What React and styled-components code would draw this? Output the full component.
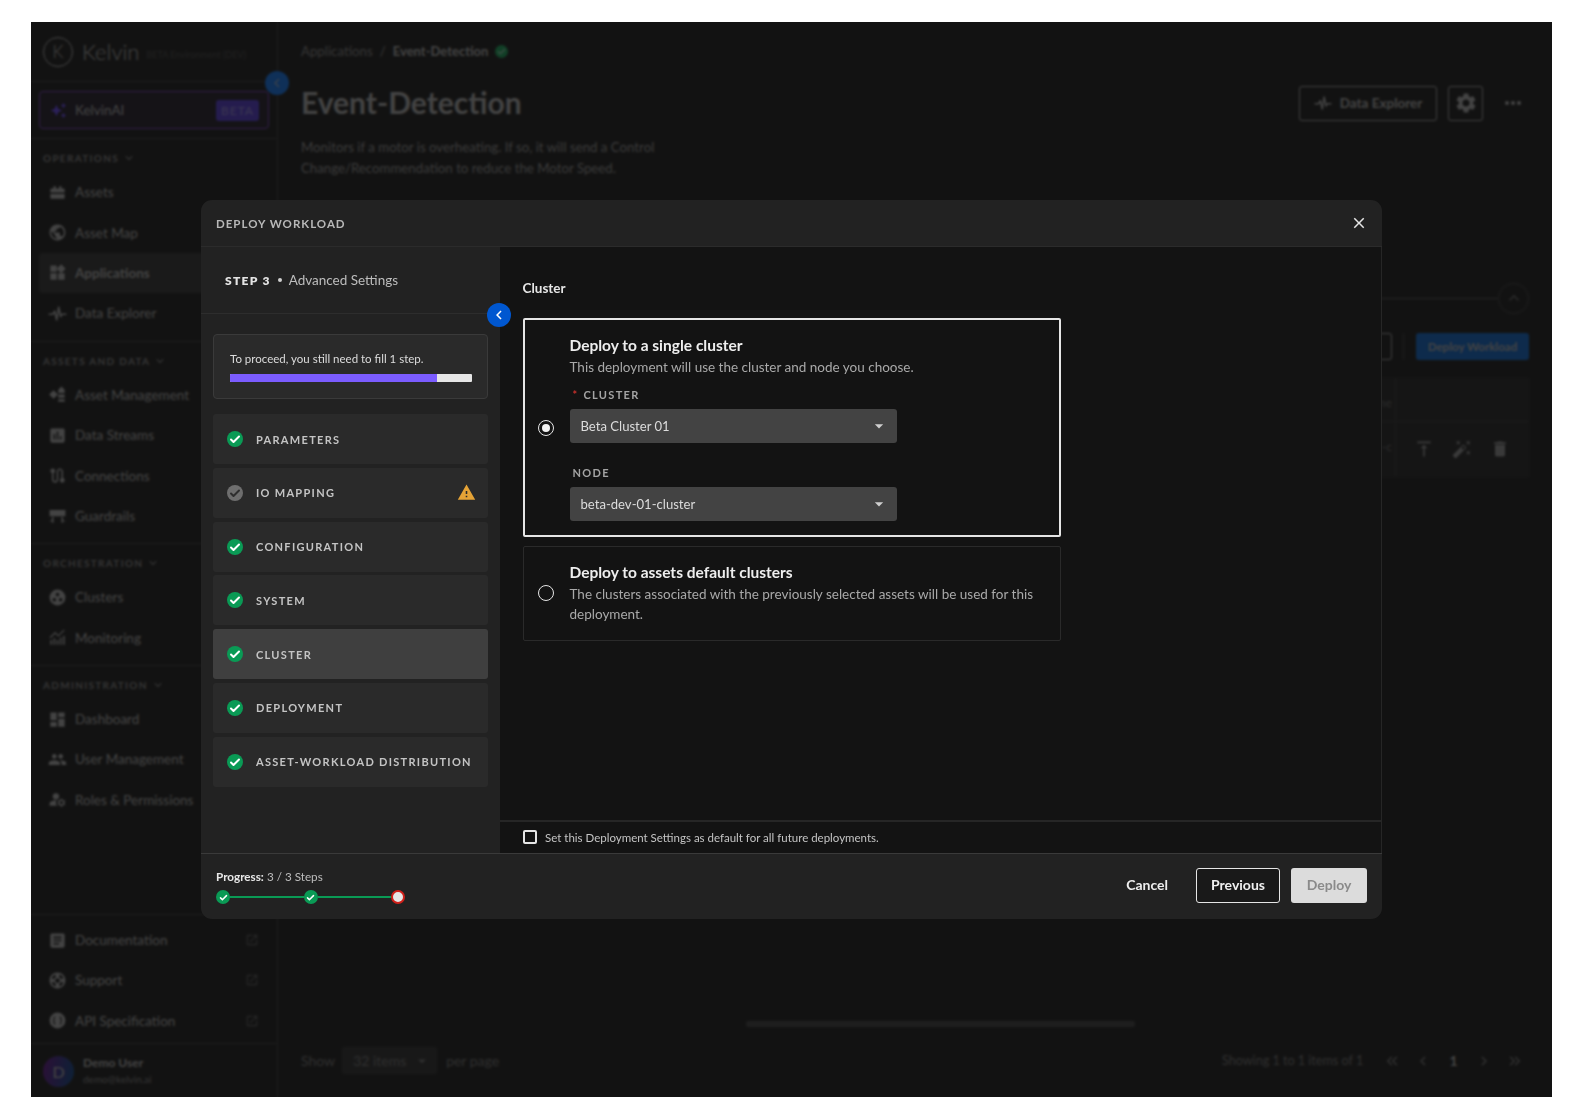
import styled, { createGlobalStyle } from 'styled-components';
import {
  MdAssessment, MdArrowDropDown, MdArticle, MdAutoAwesome, MdAutoFixHigh, MdChevronLeft, MdChevronRight,
  MdClose, MdDashboard, MdDelete, MdExpandLess, MdExpandMore, MdKeyboardDoubleArrowLeft,
  MdKeyboardDoubleArrowRight, MdManageAccounts, MdMoreHoriz, MdOpenInNew, MdPeople, MdPublic,
  MdRoute, MdSettings, MdSupport, MdVerticalAlignTop, MdWarning, MdWidgets,
} from 'react-icons/md';

const FONT = '"Lato", "Noto Sans", "Liberation Sans", sans-serif';

const GlobalStyle = createGlobalStyle`
  html, body { margin: 0; background: #fff; }
  body { font-family: ${FONT}; }
  * { box-sizing: border-box; }
`;

const Page = styled.div`
  width: 1584px;
  height: 1120px;
  padding: 22px 32px 23px 31px;
`;

const Frame = styled.div`
  position: relative;
  display: flex;
  width: 1521px;
  height: 1075px;
  overflow: hidden;
  background: #363636;
  color: #c0c0c0;
`;

/* sidebar */
const Sidebar = styled.aside`
  position: relative;
  display: flex;
  flex-direction: column;
  flex: 0 0 247px;
  border-right: 1px solid #505050;
`;

const Brand = styled.div`
  display: flex;
  align-items: center;
  height: 60px;
  padding-left: 12px;
  border-bottom: 1px solid #505050;
`;

const LogoMark = styled.span`
  display: flex;
  align-items: center;
  justify-content: center;
  width: 30px;
  height: 30px;
  border: 1.5px solid #c0c0c0;
  border-radius: 50%;
  font-size: 17px;
  font-weight: 300;
`;

const LogoText = styled.span`
  margin-left: 9px;
  font-size: 22px;
  font-weight: 300;
`;

const EnvText = styled.span`
  margin: 5px 0 0 7px;
  font-size: 9px;
  color: #5e5e5e;
  white-space: nowrap;
`;

const Collapse = styled.button`
  position: absolute;
  display: flex;
  align-items: center;
  justify-content: center;
  width: 24px;
  height: 24px;
  padding: 0;
  border: none;
  border-radius: 50%;
  color: ${(p) => p.$fg || '#fff'};
  background: ${(p) => p.$bg || '#0057d0'};
  font-size: 18px;
  top: ${(p) => p.$top}px;
  right: ${(p) => p.$right}px;
  z-index: 2;
`;

const AiWrap = styled.div`
  padding: 9px 8px 9px;
  border-bottom: 1px solid #505050;
`;

const AiBox = styled.div`
  display: flex;
  align-items: center;
  height: 38px;
  padding: 0 9px 0 10px;
  border: 1px solid #8a55c8;
  border-radius: 4px;
  background: #3d3744;
  font-size: 13.5px;
  color: #c0c0c0;
`;

const AiStar = styled(MdAutoAwesome)`
  font-size: 17px;
  color: #7b5cff;
  margin-right: 8px;
`;

const BetaTag = styled.span`
  margin-left: auto;
  padding: 3px 5px;
  border-radius: 3px;
  background: #6a52e0;
  color: #a79be8;
  font-size: 12px;
  letter-spacing: 1px;
`;

const NavSection = styled.div`
  padding-bottom: ${(p) => p.$pad ?? 6}px;
  border-bottom: 1px solid #505050;
`;

const SectionLabel = styled.div`
  display: flex;
  align-items: center;
  gap: 3px;
  height: 33px;
  padding: 5px 0 0 12px;
  font-size: 10px;
  font-weight: 700;
  letter-spacing: 1.3px;
  color: #969696;
  svg { font-size: 14px; }
`;

const NavItem = styled.div`
  display: flex;
  align-items: center;
  height: 40.4px;
  margin: 0 8px;
  padding-left: 9px;
  border-radius: 4px;
  font-size: 13.5px;
  background: ${(p) => (p.$active ? '#4a4a4a' : 'transparent')};
  font-weight: ${(p) => (p.$active ? 700 : 400)};
  white-space: nowrap;
`;

const NavGlyph = styled.span`
  display: flex;
  justify-content: center;
  flex: 0 0 18px;
  margin-right: 8px;
  font-size: 19px;
  svg { width: 19px; height: 19px; }
`;

const ExternalMark = styled(MdOpenInNew)`
  margin: 0 10px 0 auto;
  font-size: 14px;
  color: #6e6e6e;
`;

const SidebarBottom = styled.div`
  margin-top: auto;
  padding: 5px 0 2px;
  border-top: 1px solid #505050;
`;

const UserBlock = styled.div`
  display: flex;
  align-items: center;
  height: 54px;
  padding-left: 12px;
  border-top: 1px solid #505050;
`;

const Avatar = styled.span`
  display: flex;
  align-items: center;
  justify-content: center;
  width: 31px;
  height: 31px;
  margin: 2px 9px 0 0;
  border-radius: 50%;
  background: linear-gradient(100deg, #7c2d9c, #24609c);
  font-size: 16px;
`;

const UserName = styled.div`
  font-size: 12px;
  font-weight: 700;
  line-height: 16px;
`;

const UserMail = styled.div`
  font-size: 10px;
  line-height: 16px;
  color: #969696;
`;

/* page behind the dialog */
const Main = styled.main`
  display: flex;
  flex-direction: column;
  flex: 1;
  min-width: 0;
  padding: 0 23px 23px 23px;
`;

const Breadcrumb = styled.div`
  display: flex;
  align-items: center;
  gap: 7px;
  height: 58px;
  font-size: 13.25px;
  color: #969696;
`;

const CrumbStrong = styled.span`
  font-weight: 700;
  font-size: 13px;
  color: #c0c0c0;
`;

const HeaderRow = styled.div`
  display: flex;
  align-items: center;
  height: 34px;
  margin-top: 6px;
`;

const Title = styled.h1`
  margin: 0 auto 2px 0;
  font-size: 30px;
  font-weight: 700;
  line-height: 32px;
  color: #c0c0c0;
`;

const OutlineButton = styled.button`
  display: flex;
  align-items: center;
  justify-content: center;
  gap: 8px;
  height: 35px;
  width: ${(p) => p.$w}px;
  margin-left: ${(p) => p.$ml || 0}px;
  padding: 0;
  border: 1px solid #b4b4b4;
  border-radius: 3px;
  background: transparent;
  color: #c0c0c0;
  font-family: inherit;
  font-size: 13.5px;
  font-weight: 700;
`;

const MoreDots = styled(MdMoreHoriz)`
  margin: 0 4px 0 18px;
  font-size: 24px;
`;

const Description = styled.p`
  width: 370px;
  height: 43px;
  margin: 17px 0 0;
  font-size: 13.25px;
  line-height: 21px;
  color: #a4a4a4;
`;

const SectionRule = styled.div`
  display: flex;
  align-items: center;
  height: 30px;
  margin-top: 103px;
`;

const RuleLine = styled.div`
  flex: 1;
  height: 1px;
  background: #666;
`;

const RoundToggle = styled.span`
  display: flex;
  align-items: center;
  justify-content: center;
  width: 31px;
  height: 31px;
  border: 1px solid #555;
  border-radius: 50%;
  font-size: 20px;
  color: #777;
`;

const Toolbar = styled.div`
  display: flex;
  align-items: center;
  justify-content: flex-end;
  height: 27px;
  margin-top: 20px;
`;

const ToolIcon = styled.span`
  width: 30px;
  height: 27px;
  border: 1px solid #b4b4b4;
  border-radius: 3px;
`;

const ToolSep = styled.span`
  width: 1px;
  height: 25px;
  margin: 0 12px 0 11px;
  background: #555;
`;

const PrimaryDim = styled.span`
  display: flex;
  align-items: center;
  justify-content: center;
  width: 113px;
  height: 27px;
  border-radius: 3px;
  background: #287bd9;
  color: #c0c0c0;
  font-size: 11.5px;
  font-weight: 700;
`;

const Table = styled.div`
  margin-top: 18px;
  background: #3e3e3e;
`;

const TableRow = styled.div`
  display: flex;
  justify-content: flex-end;
  height: ${(p) => p.$h}px;
  border-bottom: 1px solid ${(p) => (p.$last ? 'transparent' : '#505050')};
`;

const FragmentCell = styled.div`
  padding-top: 17px;
  font-size: 12px;
  color: #7a7a7a;
  text-align: right;
`;

const ActionCell = styled.div`
  display: flex;
  align-items: center;
  gap: 18px;
  width: 134px;
  padding-left: 18px;
  margin-left: 3px;
  border-left: 1px solid #4d4d4d;
  font-size: 20px;
  color: #a4a4a4;
`;

const ScrollThumb = styled.div`
  width: 389px;
  height: 6px;
  margin: auto 0 0 445px;
  border-radius: 3px;
  background: #585858;
`;

const PagerRow = styled.div`
  display: flex;
  align-items: center;
  height: 27px;
  margin-top: 20px;
  font-size: 14px;
  color: #868686;
`;

const PerPage = styled.span`
  display: flex;
  align-items: center;
  justify-content: space-between;
  width: 95px;
  height: 27px;
  margin: 0 9px 0 7px;
  padding: 0 6px 0 11px;
  border-radius: 3px;
  background: #474747;
  svg { font-size: 18px; }
`;

const PagerText = styled.span`
  margin-left: auto;
  font-size: 12.6px;
`;

const PagerIcons = styled.span`
  display: flex;
  align-items: center;
  gap: 12.7px;
  margin: 0 5px 0 20px;
  svg { flex: 0 0 18px; font-size: 18px; }
`;

const PageNum = styled.span`
  flex: 0 0 18px;
  text-align: center;
  font-weight: 700;
  color: #c0c0c0;
`;

/* dialog */
const Overlay = styled.div`
  position: absolute;
  inset: 0;
  background: rgba(0, 0, 0, 0.65);
  backdrop-filter: blur(1px);
  z-index: 5;
`;

const Modal = styled.section`
  position: absolute;
  left: 170px;
  top: 178px;
  display: flex;
  flex-direction: column;
  width: 1181px;
  height: 719px;
  border-radius: 11px;
  overflow: hidden;
  background: #222;
  z-index: 6;
`;

const ModalHeader = styled.header`
  display: flex;
  align-items: center;
  justify-content: space-between;
  flex: 0 0 47px;
  padding: 0 14px 0 15px;
  border-bottom: 1px solid #2b2b2b;
  font-size: 11.5px;
  font-weight: 700;
  letter-spacing: 1px;
  color: #b8b8b8;
  svg { font-size: 18px; color: #e6e6e6; }
`;

const ModalBody = styled.div`
  position: relative;
  display: flex;
  flex: 1;
  min-height: 0;
`;

const StepsPanel = styled.div`
  flex: 0 0 299px;
  min-width: 0;
`;

const StepHeading = styled.div`
  display: flex;
  align-items: center;
  height: 67px;
  padding-left: 24px;
  border-bottom: 1px solid #2d2d2d;
  font-size: 13.5px;
  color: #bdbdbd;
`;

const StepNumber = styled.span`
  font-size: 12px;
  font-weight: 800;
  letter-spacing: 1.3px;
  color: #e4e4e4;
`;

const StepDot = styled.span`
  width: 4px;
  height: 4px;
  margin: 0 7px 0 7px;
  border-radius: 50%;
  background: #d0d0d0;
`;

const ProceedCard = styled.div`
  height: 65px;
  margin: 20px 12px 15px;
  padding: 17px 15px 0 16px;
  border: 1px solid #3a3a3a;
  border-radius: 4px;
  background: #2a2a2a;
  font-size: 11.5px;
  color: #dcdcdc;
`;

const ProceedTrack = styled.div`
  height: 8px;
  margin-top: 9px;
  border-radius: 1px;
  background: #e6e6e6;
  overflow: hidden;
`;

const ProceedFill = styled.div`
  height: 100%;
  background: #7b5cff;
`;

const StepList = styled.div`
  display: flex;
  flex-direction: column;
  gap: 3.75px;
  margin: 0 12px;
`;

const StepRow = styled.div`
  display: flex;
  align-items: center;
  height: 50px;
  padding: 0 12px 0 14px;
  border-radius: 3px;
  background: ${(p) => (p.$active ? '#3f3f3f' : '#2a2a2a')};
  font-size: 11px;
  font-weight: 700;
  letter-spacing: 1.3px;
  color: #c4c4c4;
  white-space: nowrap;
`;

const StatusIcon = styled.span`
  display: flex;
  align-items: center;
  justify-content: center;
  flex: 0 0 ${(p) => p.$size || 16}px;
  height: ${(p) => p.$size || 16}px;
  margin-right: ${(p) => p.$mr ?? 13}px;
  border-radius: 50%;
  background: ${(p) => p.$bg || '#0a9a55'};
  color: ${(p) => p.$fg || '#fff'};
`;

const WarnIcon = styled(MdWarning)`
  margin-left: auto;
  font-size: 19px;
  color: #e5a336;
`;

const Content = styled.div`
  display: flex;
  flex-direction: column;
  flex: 1;
  min-width: 0;
  background: #131313;
  border-right: 1px solid #262626;
`;

const ContentScroll = styled.div`
  flex: 1;
  padding: 32px 0 0 22.5px;
`;

const ContentTitle = styled.div`
  height: 18px;
  margin-bottom: 21px;
  font-size: 13.5px;
  font-weight: 700;
  line-height: 18px;
  color: #e6e6e6;
`;

const Option = styled.div`
  display: flex;
  align-items: center;
  width: 538px;
  height: ${(p) => p.$h}px;
  margin-bottom: 9px;
  padding-bottom: ${(p) => p.$shift || 0}px;
  border: ${(p) => (p.$selected ? '2px solid #e6e6e6' : '1px solid #2a2a2a')};
  border-radius: 2px;
`;

const RadioCol = styled.div`
  display: flex;
  flex: 0 0 ${(p) => p.$w}px;
  justify-content: center;
  padding-right: 2px;
`;

const Radio = styled.span`
  display: flex;
  align-items: center;
  justify-content: center;
  width: 16px;
  height: 16px;
  border: 1.5px solid #e6e6e6;
  border-radius: 50%;
  &::after {
    content: '';
    display: ${(p) => (p.$on ? 'block' : 'none')};
    width: 8px;
    height: 8px;
    border-radius: 50%;
    background: #f2f2f2;
  }
`;

const OptionBody = styled.div`
  flex: 1;
  padding-right: 20px;
`;

const OptionTitle = styled.div`
  font-size: 15.5px;
  font-weight: 700;
  line-height: 20px;
  color: #eee;
`;

const OptionText = styled.div`
  margin-top: 2px;
  font-size: 13.5px;
  line-height: 20px;
  color: #a9a9a9;
`;

const FieldLabel = styled.div`
  height: 18px;
  margin-top: ${(p) => p.$mt}px;
  padding-left: 3px;
  font-size: 11px;
  font-weight: 700;
  line-height: 18px;
  letter-spacing: 1.3px;
  color: #a4a4a4;
`;

const Required = styled.span`
  margin-right: 5px;
  color: #c9302c;
`;

const SelectBox = styled.div`
  display: flex;
  align-items: center;
  justify-content: space-between;
  width: 327px;
  height: 34px;
  margin-top: 5px;
  padding: 0 8px 0 11px;
  border-radius: 3px;
  background: #434343;
  font-size: 13.1px;
  color: #dcdcdc;
  svg { font-size: 20px; color: #cfcfcf; }
`;

const DefaultsRow = styled.label`
  display: flex;
  align-items: center;
  flex: 0 0 33px;
  padding: 0 0 1px 23px;
  border-top: 2px solid #262626;
  font-size: 11.5px;
  color: #c4c4c4;
`;

const CheckBox = styled.span`
  width: 14px;
  height: 14px;
  margin-right: 8px;
  border: 2px solid #e6e6e6;
  border-radius: 2px;
`;

const ModalFooter = styled.footer`
  display: flex;
  align-items: center;
  flex: 0 0 66px;
  padding: 0 15px;
  border-top: 1px solid #3a3a3a;
`;

const ProgressBlock = styled.div`
  width: 189px;
`;

const ProgressLabel = styled.div`
  margin-top: -1px;
  font-size: 11.7px;
  line-height: 16px;
  color: #bdbdbd;
  b { color: #e8e8e8; }
`;

const Stepper = styled.div`
  display: flex;
  align-items: center;
  margin-top: 6px;
`;

const StepperLine = styled.span`
  flex: 1;
  height: 2.5px;
  background: #0a9a55;
`;

const StepperEnd = styled.span`
  flex: 0 0 14px;
  height: 14px;
  border: 2px solid #d0201a;
  border-radius: 50%;
  background: #e6e6e6;
`;

const FooterActions = styled.div`
  display: flex;
  align-items: center;
  margin: 0 0 2px auto;
`;

const TextButton = styled.button`
  margin-right: 28px;
  padding: 0 0 2px;
  border: none;
  background: none;
  color: #eee;
  font-family: inherit;
  font-size: 14px;
  font-weight: 700;
`;

const GhostButton = styled.button`
  width: 84px;
  height: 35px;
  padding: 0 0 2px;
  border: 1.5px solid #e6e6e6;
  border-radius: 3px;
  background: #191919;
  color: #f0f0f0;
  font-family: inherit;
  font-size: 14px;
  font-weight: 700;
`;

const DisabledButton = styled.button`
  width: 76px;
  height: 35px;
  margin-left: 11px;
  padding: 0 0 2px;
  border: none;
  border-radius: 3px;
  background: #dcdcdc;
  color: #8a8a8a;
  font-family: inherit;
  font-size: 14px;
  font-weight: 700;
`;

const Svg = ({ children, fill = 'currentColor', size = 24, stroke, strokeWidth }) => (
  <svg viewBox="0 0 24 24" width={size} height={size} fill={fill} stroke={stroke} strokeWidth={strokeWidth} strokeLinecap="round" strokeLinejoin="round">
    {children}
  </svg>
);

const Wave = ({ size }) => (
  <Svg fill="none" stroke="currentColor" strokeWidth="2" size={size}>
    <path d="M1.500 13h4.500l2.500-4 2.500 11L13.500 4l2.500 12 1.500-3h5" />
  </Svg>
);
const AssetsIcon = () => (
  <Svg>
    <path d="M3 12V8.500C3 7.700 3.700 7 4.500 7H7V4h3v3h4V4h3v3h2.500c.8 0 1.500.7 1.500 1.500V12zM3 14h18v4.500c0 .8-.7 1.500-1.500 1.500h-15C3.700 20 3 19.300 3 18.500z" />
  </Svg>
);
const AssetMgmtIcon = () => (
  <Svg>
    <path d="M7 6.500 1.500 12 7 17.500 12.500 12zM17 2l-4 4v4h8V6zM13 12h8v4h-8zM13 18h8v3h-8z" />
  </Svg>
);
const GuardIcon = () => (
  <Svg>
    <path d="M2 5h20v8H2zM5 14h2v7H5zM17 14h2v7h-2zM3 18h4v1.500H3zM17 18h4v1.500h-4z" />
  </Svg>
);
const MonitoringIcon = () => (
  <Svg>
    <path d="M3 15h2v6H3zM7 13h2v8H7zM11 15h2v6h-2zM15 12h2v9h-2zM19 10h2v11h-2z" />
    <path d="M3 12l6-6 4 4 7-7" fill="none" stroke="currentColor" strokeWidth="1.500" />
  </Svg>
);
const ClustersIcon = () => (
  <Svg>
    <path
      fillRule="evenodd"
      d="M12 2a10 10 0 1 0 0 20 10 10 0 0 0 0-20zM12 6a2.300 2.300 0 1 1 0 4.600A2.300 2.300 0 0 1 12 6zM8 12.500a2.300 2.300 0 1 1 0 4.600 2.300 2.300 0 0 1 0-4.600zM16 12.500a2.300 2.300 0 1 1 0 4.600 2.300 2.300 0 0 1 0-4.600z"
    />
  </Svg>
);
const ApiIcon = () => (
  <Svg>
    <path d="M12 2a10 10 0 1 0 0 20 10 10 0 0 0 0-20zM9 7c-1.500 0-2 .8-2 2v1.500c0 .8-.4 1.200-1 1.500.6.3 1 .7 1 1.500V15c0 1.200.5 2 2 2v-1.500c-.5 0-.6-.3-.6-.8v-1.500c0-.8-.3-1.300-.8-1.700.5-.4.8-.9.8-1.700V8.300c0-.5.1-.8.6-.8zm6 0v1.500c.5 0 .6.3.6.8v1.500c0 .8.3 1.300.8 1.700-.5.400-.8.900-.8 1.700v1.500c0 .5-.1.800-.6.800V17c1.500 0 2-.8 2-2v-1.500c0-.8.4-1.200 1-1.500-.6-.3-1-.7-1-1.500V9c0-1.200-.5-2-2-2z" fillRule="evenodd" />
  </Svg>
);

const CheckMark = ({ size = 12 }) => (
  <Svg fill="none" stroke="currentColor" strokeWidth="4" size={size}>
    <path d="M4 13l5 5L20 7" />
  </Svg>
);

const NAV = [
  { label: 'OPERATIONS', pad: 7, items: [
    ['Assets', <AssetsIcon />], ['Asset Map', <MdPublic />], ['Applications', <MdWidgets />, true], ['Data Explorer', <Wave />],
  ] },
  { label: 'ASSETS AND DATA', pad: 7, items: [
    ['Asset Management', <AssetMgmtIcon />], ['Data Streams', <MdAssessment />], ['Connections', <MdRoute />], ['Guardrails', <GuardIcon />],
  ] },
  { label: 'ORCHESTRATION', pad: 7, items: [
    ['Clusters', <ClustersIcon />], ['Monitoring', <MonitoringIcon />],
  ] },
  { label: 'ADMINISTRATION', pad: 0, last: true, items: [
    ['Dashboard', <MdDashboard />], ['User Management', <MdPeople />], ['Roles & Permissions', <MdManageAccounts />],
  ] },
];

const LINKS = [
  ['Documentation', <MdArticle />],
  ['Support', <MdSupport />],
  ['API Specification', <ApiIcon />],
];

const STEPS = [
  { name: 'PARAMETERS' },
  { name: 'IO MAPPING', warn: true },
  { name: 'CONFIGURATION' },
  { name: 'SYSTEM' },
  { name: 'CLUSTER', active: true },
  { name: 'DEPLOYMENT' },
  { name: 'ASSET-WORKLOAD DISTRIBUTION' },
];

const SideNav = () => (
  <Sidebar>
    <Brand>
      <LogoMark>K</LogoMark>
      <LogoText>Kelvin</LogoText>
      <EnvText>BETA Environment (DEV)</EnvText>
    </Brand>
    <Collapse $top={49} $right={-12} $bg="#2b89fb" $fg="#9fb8d8"><MdChevronLeft /></Collapse>
    <AiWrap>
      <AiBox>
        <AiStar />
        KelvinAI
        <BetaTag>BETA</BetaTag>
      </AiBox>
    </AiWrap>
    {NAV.map((group) => (
      group.last ? (
        <div key={group.label}>
          <SectionLabel>{group.label}<MdExpandMore /></SectionLabel>
          {group.items.map(([name, icon]) => (
            <NavItem key={name}><NavGlyph>{icon}</NavGlyph>{name}</NavItem>
          ))}
        </div>
      ) : (
        <NavSection key={group.label} $pad={group.pad}>
          <SectionLabel>{group.label}<MdExpandMore /></SectionLabel>
          {group.items.map(([name, icon, active]) => (
            <NavItem key={name} $active={active}><NavGlyph>{icon}</NavGlyph>{name}</NavItem>
          ))}
        </NavSection>
      )
    ))}
    <SidebarBottom>
      {LINKS.map(([name, icon]) => (
        <NavItem key={name}><NavGlyph>{icon}</NavGlyph>{name}<ExternalMark /></NavItem>
      ))}
    </SidebarBottom>
    <UserBlock>
      <Avatar>D</Avatar>
      <div>
        <UserName>Demo User</UserName>
        <UserMail>demo@kelvin.ai</UserMail>
      </div>
    </UserBlock>
  </Sidebar>
);

const PageBehind = () => (
  <Main>
    <Breadcrumb>
      Applications
      <span>/</span>
      <CrumbStrong>Event-Detection</CrumbStrong>
      <StatusIcon $size={13} $mr={0} $bg="#33b46f" $fg="#9bd8b8"><CheckMark size={9} /></StatusIcon>
    </Breadcrumb>
    <HeaderRow>
      <Title>Event-Detection</Title>
      <OutlineButton $w={138}><Wave size={18} />Data Explorer</OutlineButton>
      <OutlineButton $w={35} $ml={11}><MdSettings size={24} /></OutlineButton>
      <MoreDots />
    </HeaderRow>
    <Description>
      Monitors if a motor is overheating. If so, it will send a Control Change/Recommendation to reduce the Motor Speed.
    </Description>
    <SectionRule>
      <RuleLine />
      <RoundToggle><MdExpandLess /></RoundToggle>
    </SectionRule>
    <Toolbar>
      <ToolIcon />
      <ToolSep />
      <PrimaryDim>Deploy Workload</PrimaryDim>
    </Toolbar>
    <Table>
      <TableRow $h={44}>
        <FragmentCell>Name</FragmentCell>
        <ActionCell />
      </TableRow>
      <TableRow $h={55} $last>
        <FragmentCell>beta-dev-01-c</FragmentCell>
        <ActionCell>
          <MdVerticalAlignTop />
          <MdAutoFixHigh />
          <MdDelete />
        </ActionCell>
      </TableRow>
    </Table>
    <ScrollThumb />
    <PagerRow>
      Show
      <PerPage>32 items<MdArrowDropDown /></PerPage>
      per page
      <PagerText>Showing 1 to 1 items of 1</PagerText>
      <PagerIcons>
        <MdKeyboardDoubleArrowLeft />
        <MdChevronLeft />
        <PageNum>1</PageNum>
        <MdChevronRight />
        <MdKeyboardDoubleArrowRight />
      </PagerIcons>
    </PagerRow>
  </Main>
);

const DeployDialog = () => (
  <Modal>
    <ModalHeader>
      DEPLOY WORKLOAD
      <MdClose />
    </ModalHeader>
    <ModalBody>
      <StepsPanel>
        <StepHeading>
          <StepNumber>STEP 3</StepNumber>
          <StepDot />
          Advanced Settings
        </StepHeading>
        <ProceedCard>
          To proceed, you still need to fill 1 step.
          <ProceedTrack>
            <ProceedFill style={{ width: '85.7%' }} />
          </ProceedTrack>
        </ProceedCard>
        <StepList>
          {STEPS.map((step) => (
            <StepRow key={step.name} $active={step.active}>
              {step.warn ? (
                <StatusIcon $bg="#6e6e6e" $fg="#2e2e2e"><CheckMark /></StatusIcon>
              ) : (
                <StatusIcon><CheckMark /></StatusIcon>
              )}
              {step.name}
              {step.warn && <WarnIcon />}
            </StepRow>
          ))}
        </StepList>
      </StepsPanel>
      <Collapse $top={56} $right={871}><MdChevronLeft /></Collapse>
      <Content>
        <ContentScroll>
          <ContentTitle>Cluster</ContentTitle>
          <Option $selected $h={219}>
            <RadioCol $w={45}><Radio $on /></RadioCol>
            <OptionBody>
              <OptionTitle>Deploy to a single cluster</OptionTitle>
              <OptionText>This deployment will use the cluster and node you choose.</OptionText>
              <FieldLabel $mt={9}><Required>*</Required>CLUSTER</FieldLabel>
              <SelectBox>Beta Cluster 01<MdArrowDropDown /></SelectBox>
              <FieldLabel $mt={21}>NODE</FieldLabel>
              <SelectBox>beta-dev-01-cluster<MdArrowDropDown /></SelectBox>
            </OptionBody>
          </Option>
          <Option $h={95} $shift={2}>
            <RadioCol $w={46}><Radio /></RadioCol>
            <OptionBody>
              <OptionTitle>Deploy to assets default clusters</OptionTitle>
              <OptionText>The clusters associated with the previously selected assets will be used for this deployment.</OptionText>
            </OptionBody>
          </Option>
        </ContentScroll>
        <DefaultsRow>
          <CheckBox />
          Set this Deployment Settings as default for all future deployments.
        </DefaultsRow>
      </Content>
    </ModalBody>
    <ModalFooter>
      <ProgressBlock>
        <ProgressLabel><b>Progress:</b> 3 / 3 Steps</ProgressLabel>
        <Stepper>
          <StatusIcon $size={14} $mr={0}><CheckMark size={9} /></StatusIcon>
          <StepperLine />
          <StatusIcon $size={14} $mr={0}><CheckMark size={9} /></StatusIcon>
          <StepperLine />
          <StepperEnd />
        </Stepper>
      </ProgressBlock>
      <FooterActions>
        <TextButton>Cancel</TextButton>
        <GhostButton>Previous</GhostButton>
        <DisabledButton>Deploy</DisabledButton>
      </FooterActions>
    </ModalFooter>
  </Modal>
);

export default function App() {
  return (
    <>
      <GlobalStyle />
      <Page>
        <Frame>
          <SideNav />
          <PageBehind />
          <Overlay />
          <DeployDialog />
        </Frame>
      </Page>
    </>
  );
}
